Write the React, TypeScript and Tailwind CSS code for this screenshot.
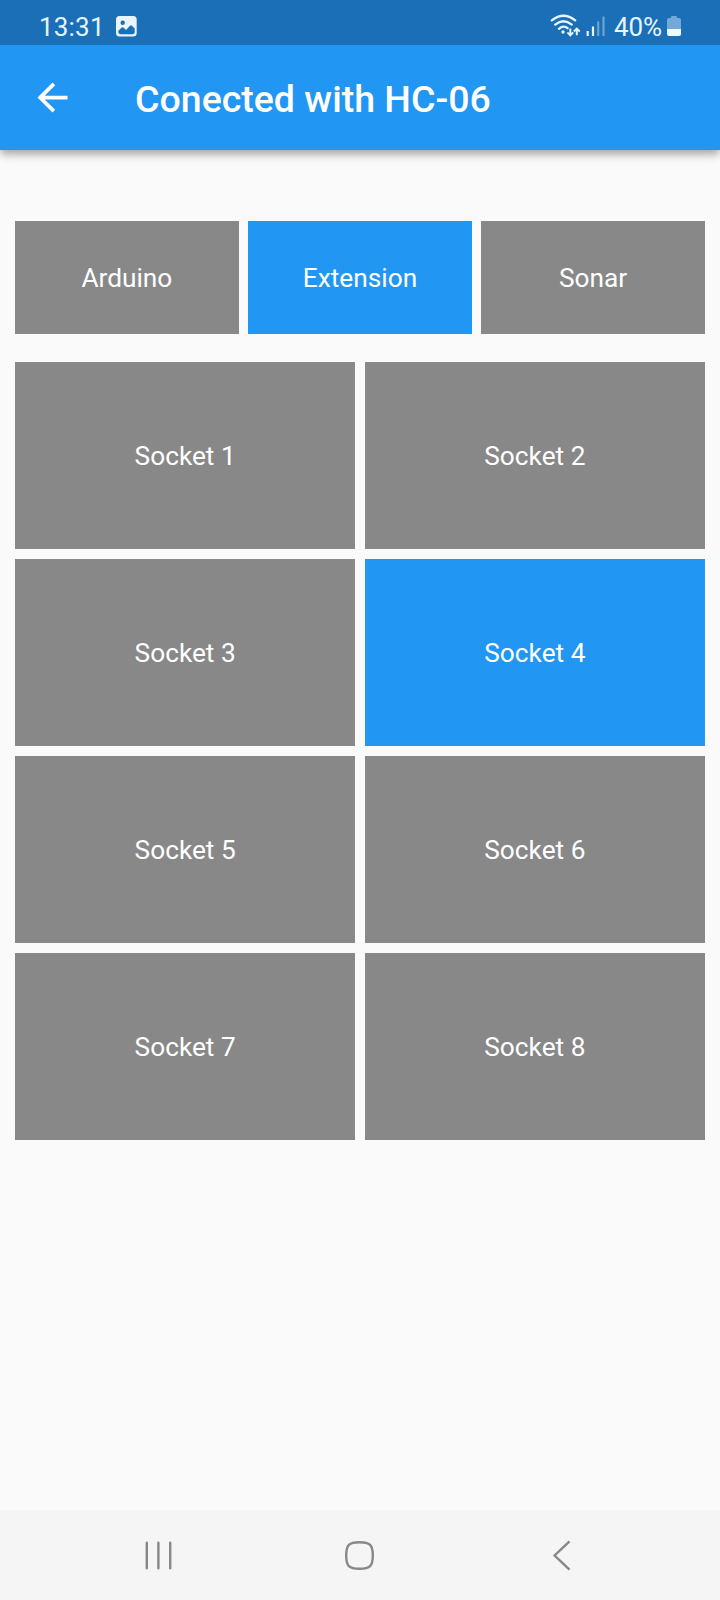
const tabs = ['Arduino', 'Extension', 'Sonar'];
const sockets = [1, 2, 3, 4, 5, 6, 7, 8];

function Tile({ label, active, size }: { label: string; active: boolean; size: string }) {
  return (
    <button
      className={`flex items-center justify-center pt-[1.2px] text-[26.25px] leading-none text-white ${size} ${
        active ? 'bg-[#2196f3]' : 'bg-[#888888]'
      }`}
    >
      {label}
    </button>
  );
}

function StatusBar() {
  return (
    <div className="flex h-[45px] items-start justify-between bg-[#1a6fb6] pl-[39px] pr-[38px] text-[#e6f5ff]">
      <div className="flex items-start">
        <span className="w-[76px] pt-[12px] text-[26px] leading-[30px] tracking-[0.2px]">13:31</span>
        <svg className="mt-[15px]" width="23" height="23" viewBox="0 0 23 23">
          <rect x="1" y="1" width="20.7" height="20.5" rx="3.5" fill="#e9f4ff" />
          <circle cx="7.7" cy="7.8" r="2.2" fill="#1a6fb6" />
          <path
            d="M3.3 15.8 6.8 12.6Q7.8 11.9 8.7 12.7L11 14.9 15 10.7Q16 9.7 17 10.7L19.7 13.6V16.8Q19.7 19.3 17.2 19.3H6Q3.3 19.3 3.3 16.6Z"
            fill="#1a6fb6"
          />
        </svg>
      </div>
      <div className="flex items-start">
        <svg className="mt-[12px]" width="64" height="27" viewBox="550 12 64 27" fill="none">
          <g stroke="#e6f5ff" strokeWidth="2.3" strokeLinecap="round">
            <path d="M551.8 20.3Q563.5 11.3 575.2 20.3" />
            <path d="M555.2 24.6Q563.5 17.8 571.8 24.6" />
            <path d="M558.9 28.8Q563.5 24.8 567.6 28.2" />
          </g>
          <circle cx="563" cy="32" r="1.7" fill="#e6f5ff" />
          <g stroke="#e6f5ff" strokeWidth="1.9">
            <path d="M570.3 28.5V35.3M567.4 32.4 570.3 35.3 573.2 32.4" />
            <path d="M576.8 35.3V28.6M573.9 31.5 576.8 28.6 579.7 31.5" />
          </g>
          <path d="M587.7 31V36M593 26.5V36" stroke="#e6f5ff" strokeWidth="2.2" />
          <path d="M598.2 21.5V36M603.5 16.5V36" stroke="#6ba3d1" strokeWidth="2.2" />
        </svg>
        <span className="w-[53px] pt-[12px] text-[26px] leading-[30px] tracking-[-0.1px]">40%</span>
        <svg className="mt-[15px]" width="15" height="22" viewBox="0 0 15 22">
          <path d="M0 5Q0 3 2 3H4V2Q4 1 5 1H9Q10 1 10 2V3H12Q14 3 14 5V14H0Z" fill="#73a9d8" />
          <path d="M0 14H14V19Q14 21 12 21H2Q0 21 0 19Z" fill="#eef8ff" />
        </svg>
      </div>
    </div>
  );
}

export default function App() {
  return (
    <div className="flex h-[1600px] w-[720px] flex-col bg-[#fafafa] font-['Roboto',sans-serif]">
      <header className="shadow-[0_4px_7px_-1px_rgba(0,0,0,0.22),0_7px_9px_0_rgba(0,0,0,0.10),0_2px_12px_0_rgba(0,0,0,0.08)]">
        <StatusBar />
        <div className="flex h-[105px] items-center bg-[#2196f3] pl-[30px]">
          <svg width="45" height="45" viewBox="0 0 24 24" fill="#fff">
            <path d="M20 11H7.83l5.59-5.59L12 4l-8 8 8 8 1.41-1.41L7.83 13H20v-2z" />
          </svg>
          <h1 className="ml-[60px] pt-[5px] text-[37.5px] font-medium leading-none text-white">
            Conected with HC-06
          </h1>
        </div>
      </header>

      <main className="flex-1 px-[15px] pt-[71.25px]">
        <div className="grid grid-cols-3 gap-[9.375px]">
          {tabs.map((tab) => (
            <Tile key={tab} label={tab} active={tab === 'Extension'} size="h-[112.5px]" />
          ))}
        </div>
        <div className="mt-[28.125px] grid grid-cols-2 gap-[9.375px]">
          {sockets.map((n) => (
            <Tile key={n} label={`Socket ${n}`} active={n === 4} size="h-[187.5px]" />
          ))}
        </div>
      </main>

      <nav className="flex h-[90px] items-center justify-between bg-[#f5f5f5] pl-[143px] pr-[145px]">
        <svg width="32" height="32" viewBox="143 1539 32 32" stroke="#888" strokeWidth="2.4" strokeLinecap="round">
          <path d="M146.8 1542.7V1568.3M158.4 1542.7V1568.3M170.2 1542.7V1568.3" />
        </svg>
        <svg width="32" height="32" viewBox="343 1539 32 32" fill="none" stroke="#888" strokeWidth="2.4">
          <path d="M359.5 1542.2C370 1542.2 372.8 1545 372.8 1555.5S370 1568.8 359.5 1568.8 346.2 1566 346.2 1555.5 349 1542.2 359.5 1542.2Z" />
        </svg>
        <svg width="32" height="32" viewBox="543 1539 32 32" fill="none" stroke="#888" strokeWidth="2.4">
          <path d="M569.5 1541.3 554.6 1555.5 569.5 1569.7" />
        </svg>
      </nav>
    </div>
  );
}
